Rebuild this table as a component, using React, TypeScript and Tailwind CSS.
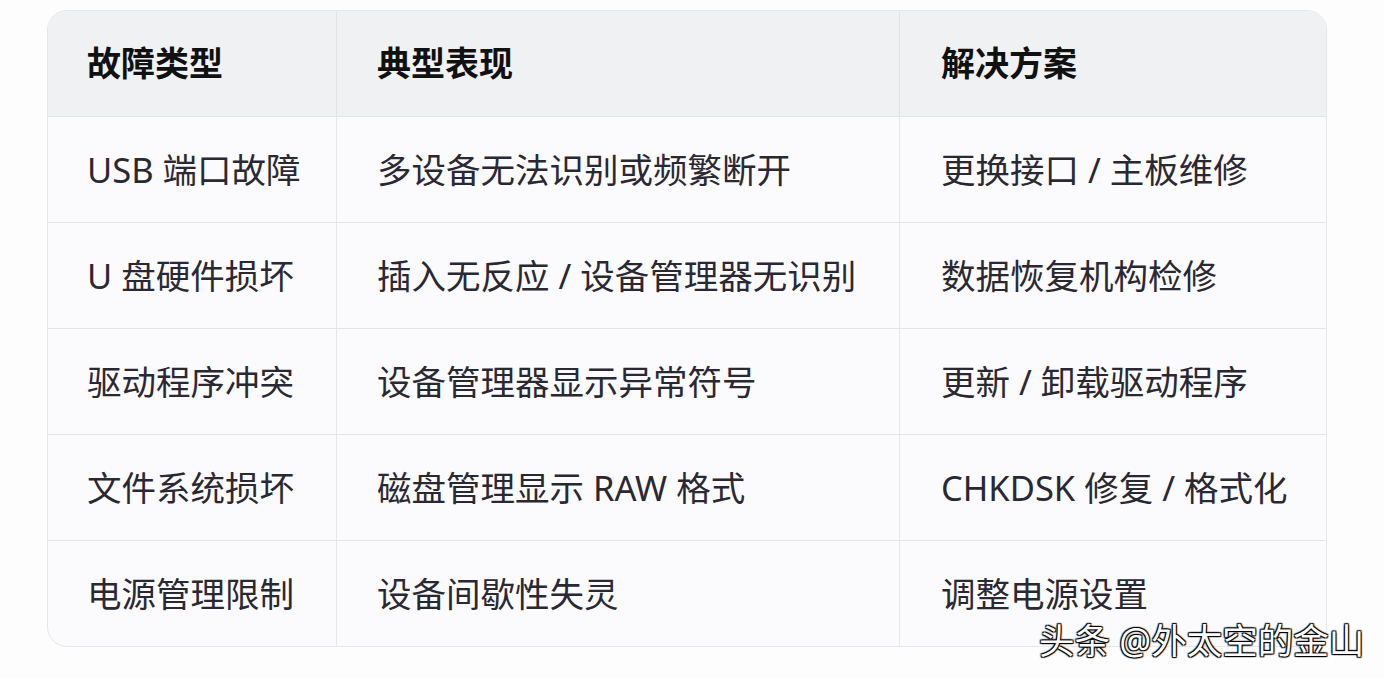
import React from 'react';

const rows: [string, string, string][] = [
  ['USB 端口故障', '多设备无法识别或频繁断开', '更换接口 / 主板维修'],
  ['U 盘硬件损坏', '插入无反应 / 设备管理器无识别', '数据恢复机构检修'],
  ['驱动程序冲突', '设备管理器显示异常符号', '更新 / 卸载驱动程序'],
  ['文件系统损坏', '磁盘管理显示 RAW 格式', 'CHKDSK 修复 / 格式化'],
  ['电源管理限制', '设备间歇性失灵', '调整电源设置'],
];

const font = { fontFamily: '"Noto Sans", "Noto Sans CJK SC", sans-serif' };

export default function App() {
  return (
    <div className="relative h-[678px] w-[1384px] overflow-hidden bg-[#fdfdfe] pl-[47px] pt-[10px]" style={font}>
      <div className="w-[1280px] overflow-hidden rounded-[20px] border border-[#e6e7eb] bg-[#fbfbfd]">
        <div className="grid h-[105px] grid-cols-[289px_563px_1fr] bg-[#f0f1f3] text-[34px] font-bold text-[#111]">
          <div className="flex items-center border-r border-[#e2e3e7] pl-[39px]">故障类型</div>
          <div className="flex items-center border-r border-[#e2e3e7] pl-[40px]">典型表现</div>
          <div className="flex items-center pl-[41px]">解决方案</div>
        </div>
        {rows.map((r, i) => (
          <div
            key={i}
            className="grid h-[106px] grid-cols-[289px_563px_1fr] border-t border-[#e3e4e8] text-[34.5px] text-[#2a2833]"
          >
            <div className="flex items-center border-r border-[#e6e7eb] pl-[39px]">{r[0]}</div>
            <div className="flex items-center border-r border-[#e6e7eb] pl-[40px]">{r[1]}</div>
            <div className="flex items-center pl-[41px]">{r[2]}</div>
          </div>
        ))}
      </div>
      <div
        className="absolute left-[1039px] top-[614px] text-[35.5px] text-white"
        style={{ textShadow: '1px 1px 1px #000, -1px -1px 1px #000, 1px -1px 1px #000, -1px 1px 1px #000' }}
      >
        头条 @外太空的金山
      </div>
    </div>
  );
}
